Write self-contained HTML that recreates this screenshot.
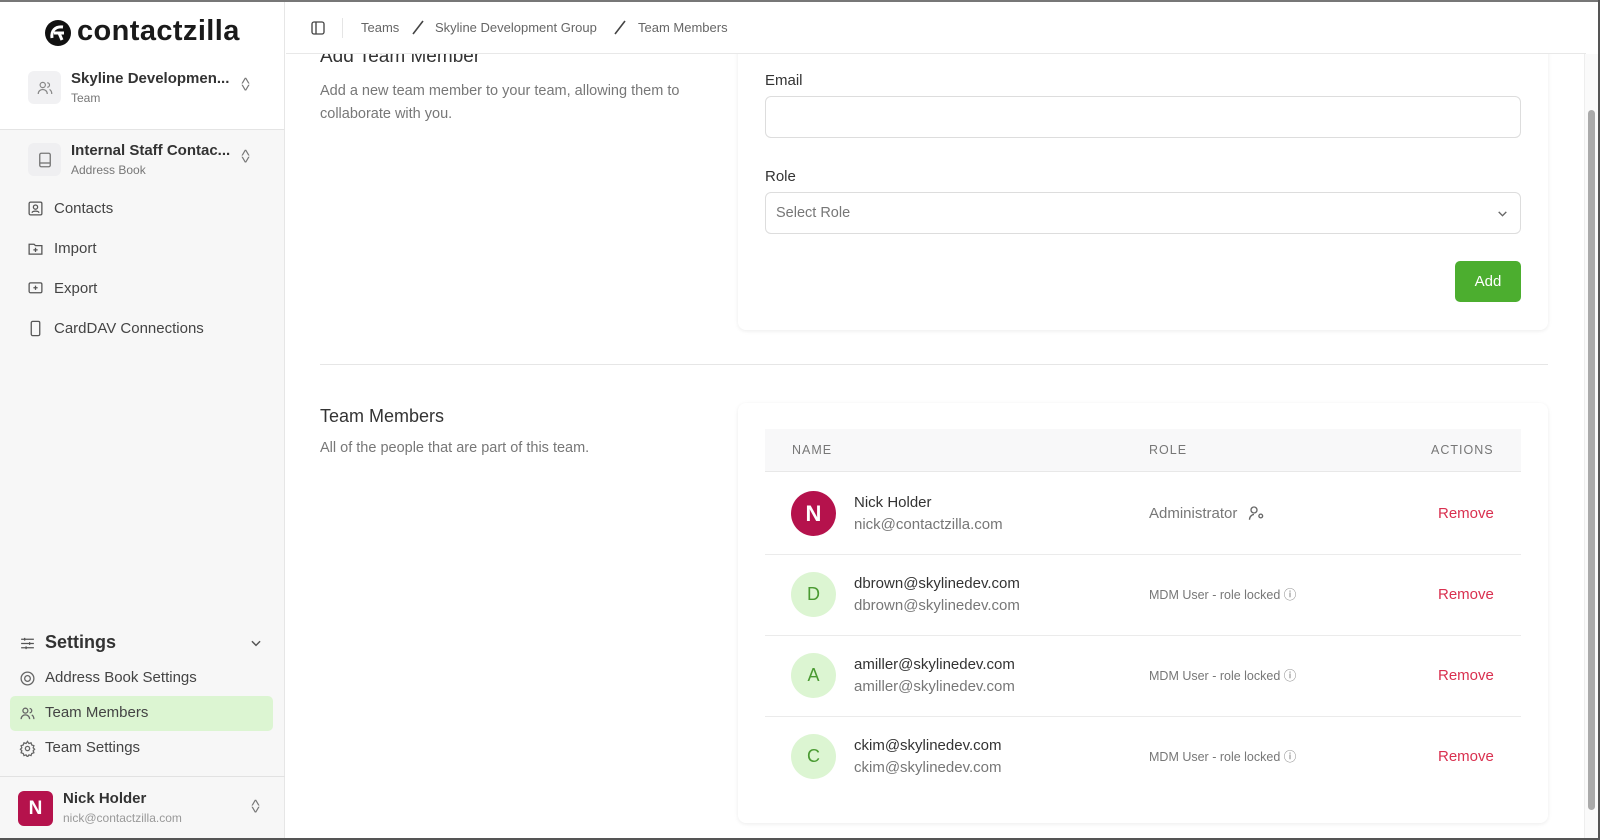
<!DOCTYPE html>
<html><head><meta charset="utf-8"><style>
*{box-sizing:border-box;margin:0;padding:0}
body{width:1600px;height:840px;overflow:hidden;background:#fff;font-family:"Liberation Sans",sans-serif;color:#222;position:relative}
.a{position:absolute;white-space:nowrap}
.g{color:#777}
svg{position:absolute}
</style></head><body>
<div class="a" style="left:0;top:0;width:1600px;height:2px;background:#777"></div>
<!-- sidebar -->
<div class="a" style="left:0;top:2px;width:285px;height:128px;background:#fff;border-right:1px solid #e6e6e6"></div>
<div class="a" style="left:0;top:129px;width:285px;height:711px;background:#f7f7f7;border-right:1px solid #e6e6e6;border-top:1px solid #e4e4e4"></div>
<svg style="left:43px;top:18px" width="30" height="30" viewBox="0 0 30 30"><circle cx="15" cy="15" r="13" fill="#111"/><path d="M20 9 C12 8 8 13 9 20 M11 15 L21 15 M16 15 L19 22" stroke="#fff" stroke-width="3" fill="none"/></svg>
<div class="a" style="left:77px;top:15px;font-size:29px;font-weight:bold;color:#1a1a1a;letter-spacing:0.4px">contactzilla</div>
<div class="a" style="left:28px;top:71px;width:33px;height:33px;background:#f1f1f3;border-radius:6px"></div>
<svg style="left:36px;top:79px" width="18" height="18" viewBox="0 0 24 24" fill="none" stroke="#888" stroke-width="1.6"><circle cx="9" cy="8" r="3.5"/><path d="M3 20c0-4 3-6 6-6s6 2 6 6M15 5a3 3 0 010 6M18 14c2 1 3 3 3 6"/></svg>
<div class="a" style="left:71px;top:70px;font-size:15px;font-weight:bold;color:#333">Skyline Developmen...</div>
<div class="a g" style="left:71px;top:91px;font-size:12px">Team</div>
<div class="a g" style="left:242px;top:78px;font-size:12px;line-height:7px;transform:scaleX(1.4)">˄<br>˅</div>
<div class="a" style="left:28px;top:143px;width:33px;height:33px;background:#efeff1;border-radius:6px"></div>
<svg style="left:36px;top:151px" width="18" height="18" viewBox="0 0 24 24" fill="none" stroke="#777" stroke-width="1.8"><rect x="5" y="3" width="14" height="18" rx="2"/><path d="M5 16h14"/></svg>
<div class="a" style="left:71px;top:142px;font-size:15px;font-weight:bold;color:#333">Internal Staff Contac...</div>
<div class="a g" style="left:71px;top:163px;font-size:12px">Address Book</div>
<div class="a g" style="left:242px;top:150px;font-size:12px;line-height:7px;transform:scaleX(1.4)">˄<br>˅</div>
<svg style="left:27px;top:200px" width="17" height="17" viewBox="0 0 24 24" fill="none" stroke="#555" stroke-width="1.8"><rect x="3" y="3" width="18" height="18" rx="2"/><circle cx="12" cy="10" r="3"/><path d="M7 18c1-3 9-3 10 0"/></svg>
<div class="a" style="left:54px;top:200px;font-size:15px;color:#444">Contacts</div>
<svg style="left:27px;top:240px" width="17" height="17" viewBox="0 0 24 24" fill="none" stroke="#555" stroke-width="1.8"><path d="M3 6h7l2 2h9v12H3z"/><path d="M12 11v6M9 14h6"/></svg>
<div class="a" style="left:54px;top:240px;font-size:15px;color:#444">Import</div>
<svg style="left:27px;top:280px" width="17" height="17" viewBox="0 0 24 24" fill="none" stroke="#555" stroke-width="1.8"><rect x="3" y="4" width="18" height="14" rx="2"/><path d="M12 8v6M9 11h6"/></svg>
<div class="a" style="left:54px;top:280px;font-size:15px;color:#444">Export</div>
<svg style="left:27px;top:320px" width="17" height="17" viewBox="0 0 24 24" fill="none" stroke="#555" stroke-width="1.8"><rect x="6" y="2" width="12" height="20" rx="2"/></svg>
<div class="a" style="left:54px;top:320px;font-size:15px;color:#444">CardDAV Connections</div>
<svg style="left:19px;top:635px" width="17" height="17" viewBox="0 0 24 24" fill="none" stroke="#555" stroke-width="1.8"><path d="M3 6h18M3 12h18M3 18h18M8 4v4M15 10v4M10 16v4"/></svg>
<div class="a" style="left:45px;top:632px;font-size:18px;font-weight:bold;color:#333">Settings</div>
<svg style="left:249px;top:636px" width="14" height="14" viewBox="0 0 24 24" fill="none" stroke="#555" stroke-width="2.5"><path d="M5 9l7 7 7-7"/></svg>
<svg style="left:19px;top:670px" width="17" height="17" viewBox="0 0 24 24" fill="none" stroke="#666" stroke-width="1.8"><circle cx="12" cy="12" r="9"/><circle cx="12" cy="12" r="4"/></svg>
<div class="a" style="left:45px;top:669px;font-size:15px;color:#444">Address Book Settings</div>
<div class="a" style="left:10px;top:696px;width:263px;height:35px;background:#dcf5d2;border-radius:5px"></div>
<svg style="left:19px;top:705px" width="17" height="17" viewBox="0 0 24 24" fill="none" stroke="#666" stroke-width="1.8"><circle cx="9" cy="8" r="3.5"/><path d="M3 20c0-4 3-6 6-6s6 2 6 6M15 5a3 3 0 010 6M18 14c2 1 3 3 3 6"/></svg>
<div class="a" style="left:45px;top:704px;font-size:15px;color:#444">Team Members</div>
<svg style="left:19px;top:740px" width="17" height="17" viewBox="0 0 24 24" fill="none" stroke="#666" stroke-width="1.8"><circle cx="12" cy="12" r="3"/><path d="M12 2l2 3 3-1 1 3 3 1-1 3 2 2-2 2 1 3-3 1-1 3-3-1-2 3-2-3-3 1-1-3-3-1 1-3-2-2 2-2-1-3 3-1 1-3 3 1z"/></svg>
<div class="a" style="left:45px;top:739px;font-size:15px;color:#444">Team Settings</div>
<div class="a" style="left:0;top:776px;width:285px;height:1px;background:#e2e2e2"></div>
<div class="a" style="left:18px;top:791px;width:35px;height:35px;background:#b5124c;border-radius:6px;color:#fff;font-weight:bold;font-size:19px;text-align:center;line-height:35px">N</div>
<div class="a" style="left:63px;top:790px;font-size:15px;font-weight:bold;color:#333">Nick Holder</div>
<div class="a g" style="left:63px;top:811px;font-size:12px;color:#999">nick@contactzilla.com</div>
<div class="a g" style="left:252px;top:800px;font-size:12px;line-height:7px;transform:scaleX(1.4)">˄<br>˅</div>
<!-- header -->
<div class="a" style="left:286px;top:2px;width:1300px;height:52px;background:#fff;border-bottom:1px solid #e8e8e8;z-index:2"></div>
<svg style="left:310px;top:20px;z-index:3" width="16" height="16" viewBox="0 0 24 24" fill="none" stroke="#444" stroke-width="2"><rect x="3" y="3" width="18" height="18" rx="3"/><path d="M9 3v18"/></svg>
<div class="a" style="left:342px;top:18px;width:1px;height:20px;background:#e5e5e5;z-index:3"></div>
<div class="a" style="left:361px;top:20px;font-size:13px;color:#666;z-index:3">Teams</div>
<div class="a" style="left:435px;top:20px;font-size:13px;color:#666;z-index:3">Skyline Development Group</div>
<div class="a" style="left:638px;top:20px;font-size:13px;color:#666;z-index:3">Team Members</div>
<svg style="left:410px;top:19px;z-index:3" width="16" height="16" viewBox="0 0 16 16"><path d="M3 15L13 2" stroke="#444" stroke-width="1.6"/></svg>
<svg style="left:612px;top:19px;z-index:3" width="16" height="16" viewBox="0 0 16 16"><path d="M3 15L13 2" stroke="#444" stroke-width="1.6"/></svg>
<!-- content -->
<div class="a" style="left:320px;top:46px;font-size:19px;color:#333;z-index:1">Add Team Member</div>
<div class="a g" style="left:320px;top:80px;font-size:14.5px;line-height:22.5px">Add a new team member to your team, allowing them to<br>collaborate with you.</div>
<div class="a" style="left:738px;top:30px;width:810px;height:300px;background:#fff;border-radius:8px;box-shadow:0 1px 4px rgba(0,0,0,0.08)"></div>
<div class="a" style="left:765px;top:72px;font-size:15px;color:#333">Email</div>
<div class="a" style="left:765px;top:96px;width:756px;height:42px;border:1px solid #ddd;border-radius:6px"></div>
<div class="a" style="left:765px;top:168px;font-size:15px;color:#333">Role</div>
<div class="a" style="left:765px;top:192px;width:756px;height:42px;border:1px solid #ddd;border-radius:6px"></div>
<div class="a g" style="left:776px;top:205px;font-size:14.5px">Select Role</div>
<svg style="left:1496px;top:207px" width="13" height="13" viewBox="0 0 24 24" fill="none" stroke="#666" stroke-width="2.5"><path d="M5 9l7 7 7-7"/></svg>
<div class="a" style="left:1455px;top:261px;width:66px;height:41px;background:#4cae2f;border-radius:5px;color:#fff;font-size:15px;text-align:center;line-height:41px">Add</div>
<div class="a" style="left:320px;top:364px;width:1228px;height:1px;background:#e6e6e6"></div>
<div class="a" style="left:320px;top:406px;font-size:18px;color:#333">Team Members</div>
<div class="a g" style="left:320px;top:440px;font-size:14.5px">All of the people that are part of this team.</div>
<div class="a" style="left:738px;top:403px;width:810px;height:420px;background:#fff;border-radius:8px;box-shadow:0 1px 4px rgba(0,0,0,0.08)"></div>
<div class="a" style="left:765px;top:429px;width:756px;height:43px;background:#f8f8f9;border-bottom:1px solid #e8e8e8"></div>
<div class="a g" style="left:792px;top:443px;font-size:12.5px;letter-spacing:1px">NAME</div>
<div class="a g" style="left:1149px;top:443px;font-size:12.5px;letter-spacing:1px">ROLE</div>
<div class="a g" style="left:1431px;top:443px;font-size:12.5px;letter-spacing:1px">ACTIONS</div>
<!-- rows -->
<div class="a" style="left:765px;top:554px;width:756px;height:1px;background:#ebebeb"></div>
<div class="a" style="left:765px;top:635px;width:756px;height:1px;background:#ebebeb"></div>
<div class="a" style="left:765px;top:716px;width:756px;height:1px;background:#ebebeb"></div>

<div class="a" style="left:791px;top:491px;width:45px;height:45px;border-radius:50%;background:#b5124c;color:#fff;font-size:22px;font-weight:bold;text-align:center;line-height:45px">N</div>
<div class="a" style="left:854px;top:494px;font-size:15px;color:#333">Nick Holder</div>
<div class="a g" style="left:854px;top:516px;font-size:15px">nick@contactzilla.com</div>
<div class="a g" style="left:1149px;top:505px;font-size:15px">Administrator</div>
<svg style="left:1248px;top:505px" width="18" height="16" viewBox="0 0 24 20" fill="none" stroke="#666" stroke-width="1.8"><circle cx="8" cy="6" r="4"/><path d="M2 19c0-4 3-7 6-7"/><circle cx="17" cy="14" r="2.5"/></svg>
<div class="a" style="left:1438px;top:505px;font-size:15px;color:#d9304f">Remove</div>

<div class="a" style="left:791px;top:572px;width:45px;height:45px;border-radius:50%;background:#dcf5d2;color:#4a9a32;font-size:18px;text-align:center;line-height:45px">D</div>
<div class="a" style="left:854px;top:575px;font-size:15px;color:#333">dbrown@skylinedev.com</div>
<div class="a g" style="left:854px;top:597px;font-size:15px">dbrown@skylinedev.com</div>
<div class="a g" style="left:1149px;top:588px;font-size:12.5px;line-height:14px;top:588px">MDM User - role locked ⓘ</div>
<div class="a" style="left:1438px;top:586px;font-size:15px;color:#d9304f">Remove</div>

<div class="a" style="left:791px;top:653px;width:45px;height:45px;border-radius:50%;background:#dcf5d2;color:#4a9a32;font-size:18px;text-align:center;line-height:45px">A</div>
<div class="a" style="left:854px;top:656px;font-size:15px;color:#333">amiller@skylinedev.com</div>
<div class="a g" style="left:854px;top:678px;font-size:15px">amiller@skylinedev.com</div>
<div class="a g" style="left:1149px;top:669px;font-size:12.5px;line-height:14px">MDM User - role locked ⓘ</div>
<div class="a" style="left:1438px;top:667px;font-size:15px;color:#d9304f">Remove</div>

<div class="a" style="left:791px;top:734px;width:45px;height:45px;border-radius:50%;background:#dcf5d2;color:#4a9a32;font-size:18px;text-align:center;line-height:45px">C</div>
<div class="a" style="left:854px;top:737px;font-size:15px;color:#333">ckim@skylinedev.com</div>
<div class="a g" style="left:854px;top:759px;font-size:15px">ckim@skylinedev.com</div>
<div class="a g" style="left:1149px;top:750px;font-size:12.5px;line-height:14px">MDM User - role locked ⓘ</div>
<div class="a" style="left:1438px;top:748px;font-size:15px;color:#d9304f">Remove</div>
<!-- scrollbar/frame -->
<div class="a" style="left:1584px;top:54px;width:14px;height:786px;background:#fafafa;border-left:1px solid #eee"></div>
<div class="a" style="left:1588px;top:110px;width:7px;height:700px;background:#aaa;border-radius:4px"></div>
<div class="a" style="left:1598px;top:0;width:2px;height:840px;background:#555"></div>
<div class="a" style="left:0;top:838px;width:1600px;height:2px;background:#555"></div>
</body></html>
